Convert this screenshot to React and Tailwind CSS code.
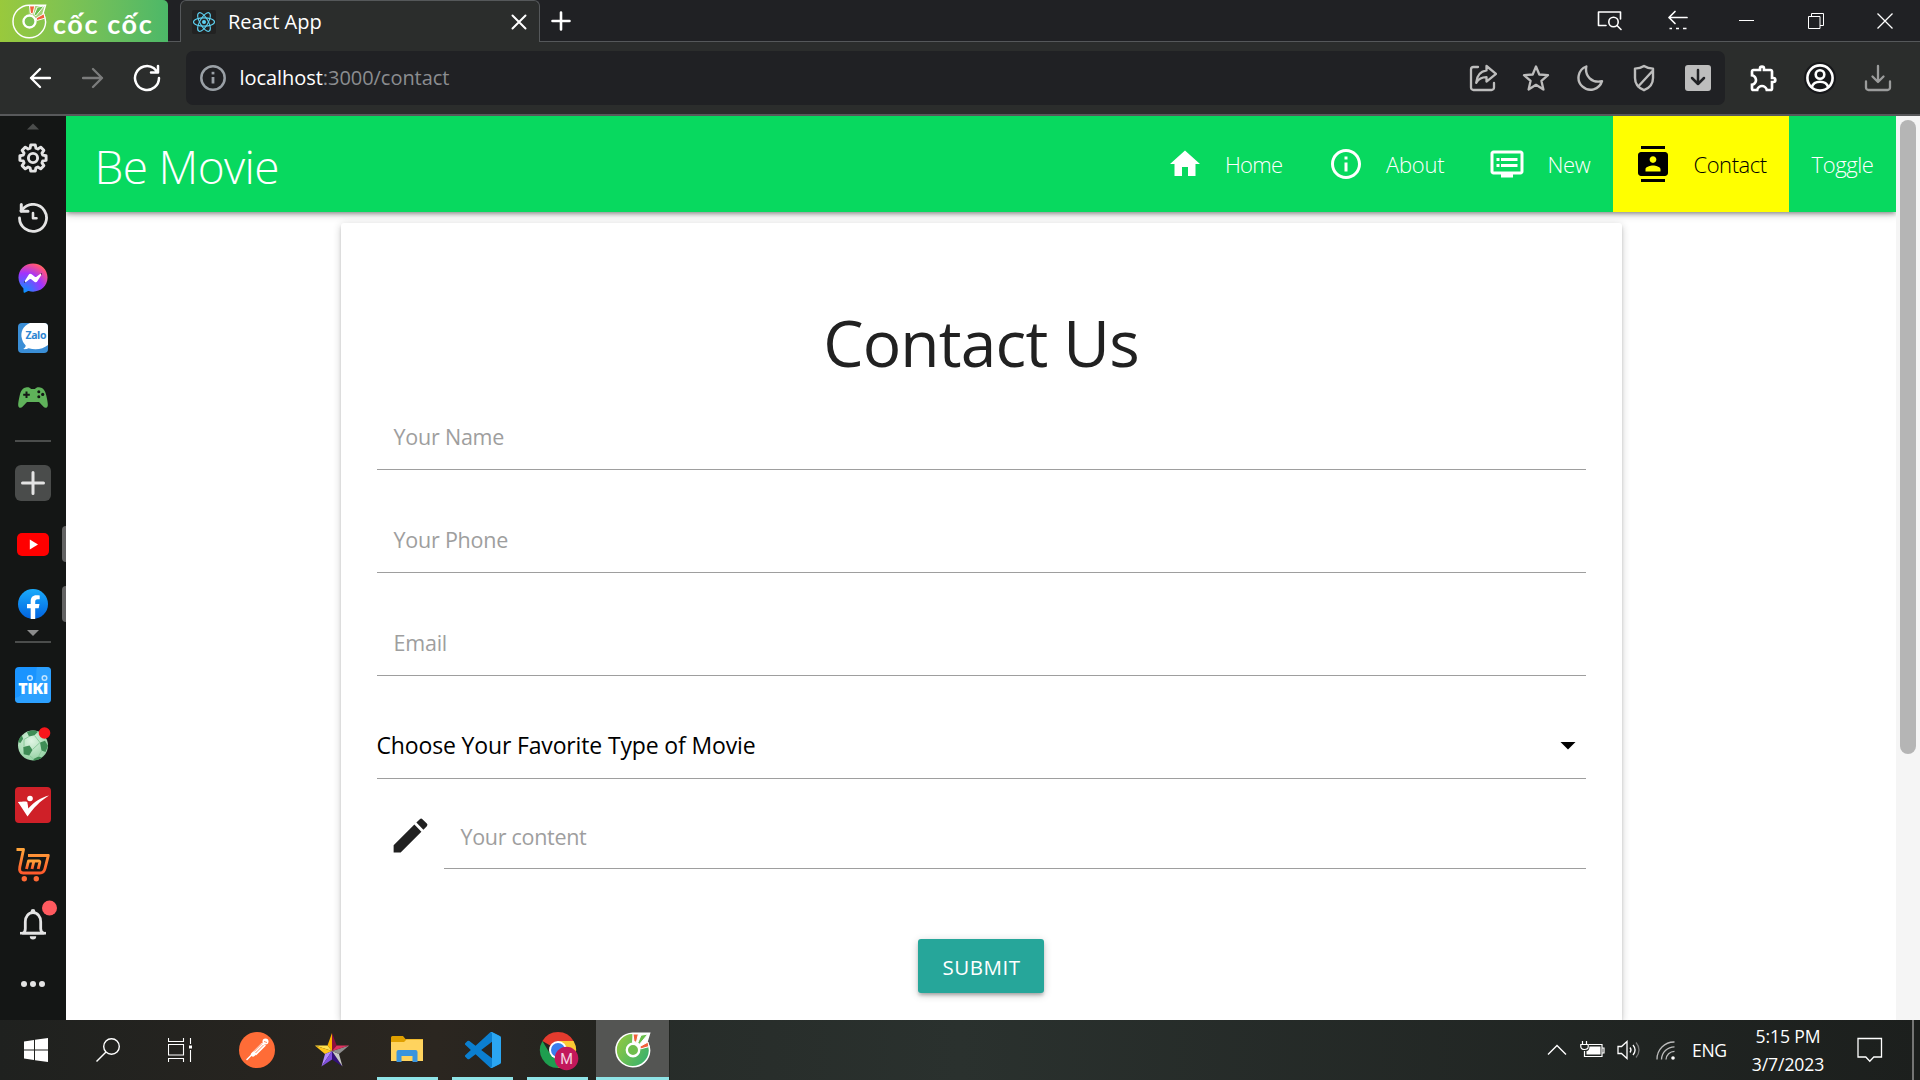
import { MdHome, MdInfoOutline, MdDvr, MdContacts, MdEdit, MdArrowDropDown, MdOutlineExtension } from "react-icons/md";
import { FaFacebookMessenger } from "react-icons/fa";

const line = { fill: "none", stroke: "currentColor", strokeLinecap: "round", strokeLinejoin: "round" };

/* ---------- shared drawings ---------- */

function CocCocMark({ size, filled, id }) {
  return (
    <svg width={size} height={size} viewBox="0 0 36 36">
      <defs>
        <linearGradient id={id} x1="0" y1="0" x2="1" y2="0.6">
          <stop offset="0" stopColor="#9acb3c" />
          <stop offset="1" stopColor="#3db26a" />
        </linearGradient>
      </defs>
      <path d="M34.5 1.2H17.5A16.8 16.8 0 1 0 34.6 18.5C34.6 14.5 33.5 12 32 9.6L34.5 1.2Z" fill={filled ? `url(#${id})` : "none"} stroke="#fff" strokeWidth={filled ? 1.6 : 1.5} />
      <path d="M17.6 1.5h16.6l-2.4 8.2 1.8 5.2-10 1.6-6.6-6Z" fill="#fff" opacity={filled ? 1 : 0.25} />
      <path d="M18 2h5.4l-2 8.4-2.4-1Z" fill="#f0623c" stroke="#fff" />
      <path d="M26 3.2 33 2l-8.4 10.2-1.8-1.4Z" fill="#6abf4b" stroke="#fff" />
      <path d="m25 14.4 8-4.4.8 4.6-8.4 2.4Z" fill="#f0623c" stroke="#fff" />
      <circle cx="18" cy="18" r="6.2" fill={filled ? "#6fbe4c" : "#7cc251"} stroke="#fff" strokeWidth="2.4" />
    </svg>
  );
}

function ReactMark() {
  return (
    <svg width="24" height="24" viewBox="0 0 24 24" fill="none" stroke="#5ed3f3" strokeWidth="1.1">
      <rect width="24" height="24" rx="2" fill="#222222" stroke="none" />
      <circle cx="12" cy="12" r="2" fill="#5ed3f3" stroke="none" />
      <ellipse cx="12" cy="12" rx="10.5" ry="4.1" />
      <ellipse cx="12" cy="12" rx="10.5" ry="4.1" transform="rotate(60 12 12)" />
      <ellipse cx="12" cy="12" rx="10.5" ry="4.1" transform="rotate(120 12 12)" />
    </svg>
  );
}

/* ---------- title bar ---------- */

function TitleBar() {
  return (
    <div className="flex h-[42px] shrink-0 bg-[#202124] text-white">
      <div className="flex w-[168px] items-center rounded-tr-[5px] bg-linear-to-r from-[#99c93c] to-[#4cb868] pl-[12px]">
        <CocCocMark size={35} id="cc-top" />
        <span className="ml-1.5 pt-1 font-['Lato'] text-[27px] leading-none font-bold tracking-[1.6px] whitespace-nowrap">cốc cốc</span>
      </div>
      <div className="w-[12px] border-b border-[#55585a]" />
      <div className="flex w-[360px] items-center rounded-t-[6px] border border-b-0 border-[#55585a] bg-[#2b2d2c] pl-[11px]">
        <ReactMark />
        <span className="ml-[12px] grow font-['Open_Sans'] text-[20px]">React App</span>
        <svg width="16" height="16" viewBox="0 0 16 16" className="mr-[12px]" {...line} strokeWidth="2"><path d="m1.5 1.5 13 13m0-13-13 13" /></svg>
      </div>
      <div className="flex grow items-center border-b border-[#55585a] pl-[11px]">
        <svg width="20" height="20" viewBox="0 0 20 20" {...line} strokeWidth="2.6"><path d="M10 1.5v17M1.5 10h17" /></svg>
        <div className="ml-auto flex items-center pr-[27px]">
          <svg width="27" height="21" viewBox="0 0 27 21" {...line} strokeWidth="1.6">
            <path d="M10 15.5H2.5V2h22v7" /><circle cx="17.5" cy="12" r="4.7" /><path d="m21 15.5 4 4" />
          </svg>
          <svg width="22" height="21" viewBox="0 0 22 21" className="ml-[44px]" {...line} strokeWidth="1.7">
            <path d="M20 7.5H2m6-6-6 6 6 6" /><path d="M2.5 18.5h2.5m4 0h3m4 0h3.5" strokeLinecap="butt" />
          </svg>
          <div className="ml-[50px] h-px w-[15px] bg-white" />
          <svg width="16" height="16" viewBox="0 0 16 16" className="ml-[54px]" fill="none" stroke="currentColor"><path d="M.5 3.5h11.5v12H.5ZM3.5 3.5V.5h12v12H12" /></svg>
          <svg width="16" height="16" viewBox="0 0 16 16" className="ml-[53px]" fill="none" stroke="currentColor" strokeWidth="1.3"><path d="m.5.5 15 15m0-15-15 15" /></svg>
        </div>
      </div>
    </div>
  );
}

/* ---------- toolbar ---------- */

function ToolBar() {
  return (
    <div className="flex h-[74px] shrink-0 items-center border-b-2 border-[#58595b] bg-[#2b2d2c] text-white">
      <svg width="22" height="22" viewBox="0 0 22 22" className="ml-[29px]" {...line} strokeWidth="2.3"><path d="M21 11H2m9-9-9 9 9 9" /></svg>
      <svg width="22" height="22" viewBox="0 0 22 22" className="ml-[31px] text-[#7b7c7c]" {...line} strokeWidth="2.3"><path d="M1 11h19m-9-9 9 9-9 9" /></svg>
      <svg width="28" height="28" viewBox="0 0 28 28" className="ml-[29px]" {...line} strokeWidth="2.5"><path d="M26 14a12 12 0 1 1-5-9.7L24.5 8M18 8.5h7V2" /></svg>
      <div className="ml-[25px] flex h-[54px] w-[1539px] items-center rounded-[7px] bg-[#202124]">
        <svg width="28" height="28" viewBox="0 0 28 28" className="ml-[13px] text-[#9aa0a6]" {...line} strokeWidth="2.5">
          <circle cx="14" cy="14" r="11.7" /><path d="M14 13v6.5" strokeWidth="2.8" strokeLinecap="butt" /><path d="M14 7.8v2.6" strokeWidth="2.8" strokeLinecap="butt" />
        </svg>
        <span className="ml-[12.5px] font-['Open_Sans'] text-[20px] tracking-[-0.05px]">localhost<span className="text-[#8b8d90]">:3000/contact</span></span>
        <div className="ml-auto flex items-center pr-[13px] text-[#bdbdbd]">
          <svg width="28" height="28" viewBox="0 0 28 28" {...line} strokeWidth="2.3">
            <path d="M9 3H4.5A2.500 2.500 0 0 0 2 5.5v18A2.500 2.500 0 0 0 4.5 26h18a2.500 2.500 0 0 0 2.5-2.5V19" />
            <path d="M17.500 2 27 9.800l-9.500 7.800v-4.400c-5 0-8 1.800-10.300 5.600.5-7 4.300-11.400 10.300-12.400Z" />
          </svg>
          <svg width="28" height="28" viewBox="0 0 28 28" className="ml-[25px]" {...line} strokeWidth="2.3"><path d="m14 2.500 3.300 8 8.700.7-6.600 5.600 2 8.700-7.400-4.700-7.400 4.700 2-8.700L2 11.200l8.700-.7Z" /></svg>
          <svg width="28" height="28" viewBox="0 0 28 28" className="ml-[26px]" {...line} strokeWidth="2.4"><path d="M10.300 2.500A12 12 0 1 0 26 17.200C16 19.500 8.500 12 10.300 2.500Z" /></svg>
          <svg width="28" height="28" viewBox="0 0 28 28" className="ml-[26px]" {...line} strokeWidth="2.4"><path d="M14 2c3 2 6 2.600 9 2.600V14c0 6-3.500 10-9 12.200C8.500 24 5 20 5 14V4.600C8 4.600 11 4 14 2ZM22.500 7 8.200 22.500" /></svg>
          <svg width="28" height="28" viewBox="0 0 28 28" className="ml-[26px]">
            <rect x="1" y="1" width="26" height="26" rx="3" fill="#bdbdbd" />
            <path d="M14 6v14m-6-6 6 6 6-6" fill="none" stroke="#202124" strokeWidth="2.5" strokeLinecap="round" strokeLinejoin="round" />
          </svg>
        </div>
      </div>
      <MdOutlineExtension className="ml-[23px] size-[32px]" />
      <svg width="34" height="34" viewBox="0 0 34 34" className="ml-[22.5px]">
        <circle cx="17" cy="17" r="16" fill="#17181b" />
        <g {...line} stroke="#fff" strokeWidth="2.6"><circle cx="17" cy="17" r="12.6" /><circle cx="17" cy="13.5" r="4.3" /><path d="M8.800 26c1.200-3.600 4.200-5.200 8.200-5.200s7 1.600 8.200 5.200" /></g>
      </svg>
      <svg width="28" height="28" viewBox="0 0 28 28" className="ml-[27.5px] text-[#9b9c9c]" {...line} strokeWidth="2.3"><path d="M14 2v15.500M8.500 12.500l5.500 5.500 5.500-5.500M2 17.500v6A2.500 2.500 0 0 0 4.500 26h19a2.500 2.500 0 0 0 2.500-2.500v-6" /></svg>
    </div>
  );
}

/* ---------- side bar ---------- */

const gearPath = (() => {
  const pts = [];
  for (let i = 0; i < 8; i++) {
    const c = (i * Math.PI) / 4 - Math.PI / 2;
    [[-0.29, 10.2], [-0.17, 13.3], [0.17, 13.3], [0.29, 10.2]].forEach(([a, r]) => {
      pts.push(`${(15 + r * Math.cos(c + a)).toFixed(2)} ${(15 + r * Math.sin(c + a)).toFixed(2)}`);
    });
  }
  return `M${pts.join("L")}Z`;
})();

function Cell({ children }) {
  return <div className="flex h-[60px] w-full shrink-0 items-center justify-center">{children}</div>;
}

function SideBar() {
  return (
    <div className="relative flex w-[66px] shrink-0 flex-col items-center bg-[#141615] text-[#e4e4e4]">
      <svg width="12" height="12" viewBox="0 0 12 12" className="shrink-0 overflow-visible"><path d="M0 13.500 6 7.500l6 6Z" fill="#4b4d4c" /></svg>
      <Cell><svg width="30" height="30" viewBox="0 0 30 30" {...line} strokeWidth="2.9"><path d={gearPath} /><circle cx="15" cy="15" r="4.6" /></svg></Cell>
      <Cell>
        <svg width="30" height="30" viewBox="0 0 30 30" {...line} strokeWidth="2.8">
          <path d="M1.500 15A13.500 13.500 0 1 0 5 5.800L3 8" /><path d="M3.300 1.500V8.200H10" strokeWidth="3" /><path d="M15 10v5.300h3.500" strokeWidth="2.6" />
        </svg>
      </Cell>
      <Cell>
        <div className="relative size-[30px]">
          <div className="absolute inset-[6px] rounded-full bg-white" />
          <FaFacebookMessenger size={30} className="relative" fill="url(#messenger)" />
          <svg width="0" height="0" className="absolute">
            <defs>
              <radialGradient id="messenger" cx="0.19" cy="1" r="1.1">
                <stop offset="0" stopColor="#0099ff" /><stop offset="0.6" stopColor="#a033ff" /><stop offset="0.93" stopColor="#ff5280" /><stop offset="1" stopColor="#ff7061" />
              </radialGradient>
            </defs>
          </svg>
        </div>
      </Cell>
      <Cell>
        <div className="relative size-[30px] overflow-hidden rounded-[4px] bg-[#3a8ed6]">
          <svg width="30" height="30" viewBox="0 0 30 30" className="absolute inset-0"><path d="M30 0H12C5 3 2 9 4 16c.8 3.500 2.500 5 3.700 6.500 0 1.500-1 2.700-2.500 3.500 2.500.4 4-.2 5.500-.8C18 27.500 25 26 30 22Z" fill="#fff" /></svg>
          <span className="absolute top-[6px] left-[7.5px] font-['Open_Sans'] text-[10.5px] leading-[13px] font-bold tracking-[-0.4px] text-[#2d86d2]">Zalo</span>
        </div>
      </Cell>
      <Cell>
        <svg width="30" height="22" viewBox="0 0 30 22">
          <path d="M8 .5c2-.5 4 0 5 1.500h4c1-1.500 3-2 5-1.500 3.500.7 5.200 3 6.300 8 .9 4 1.700 8 1.500 10-.2 2.500-2.800 3-4.300 1.300L21 15H9l-4.500 4.800C3 21.500.4 21 .2 18.500 0 16.500.8 12.500 1.700 8.500 2.800 3.500 4.500 1.200 8 .5Z" fill="#5fb25a" />
          <path d="M7.500 4.500h2v2.300h2.300v2H9.500v2.300h-2V8.800H5.200v-2h2.300Z" fill="#141615" />
          <g fill="#141615"><circle cx="20.800" cy="4.800" r="1.500" /><circle cx="20.800" cy="9.800" r="1.500" /><circle cx="24.700" cy="7.400" r="1.600" /></g>
        </svg>
      </Cell>
      <div className="mt-[12px] mb-[11px] h-0.5 w-9 shrink-0 bg-[#4b4d4c]" />
      <Cell>
        <div className="flex size-9 items-center justify-center rounded-[6px] bg-[#4a4c4b]">
          <svg width="24" height="24" viewBox="0 0 24 24" {...line} strokeWidth="3"><path d="M12 1.500v21M1.500 12h21" /></svg>
        </div>
      </Cell>
      <div className="relative mt-px flex h-[60px] w-full shrink-0 items-center justify-center">
        <svg width="32" height="23" viewBox="0 0 32 23"><rect width="32" height="23" rx="5" fill="#f00" /><path d="m12.800 6.500 8.200 5-8.200 5Z" fill="#fff" /></svg>
        <div className="absolute top-[12px] right-0 h-9 w-1 rounded-l-[4px] bg-[#636363]" />
      </div>
      <div className="relative flex h-[60px] w-full shrink-0 items-center justify-center">
        <svg width="30" height="30" viewBox="0 0 30 30">
          <defs><linearGradient id="fb" x1="0" y1="0" x2="0" y2="1"><stop offset="0" stopColor="#1aabfb" /><stop offset="1" stopColor="#0163e0" /></linearGradient></defs>
          <circle cx="15" cy="15" r="15" fill="url(#fb)" />
          <path d="M12.700 30V19.300H9V15h3.700v-2.500c0-4.200 2-6.300 5.700-6.300 1.200 0 2.400.2 3.300.4v3.700h-2c-2 0-2.500 1-2.500 2.400V15h4.300l-.8 4.300h-3.500V30Z" fill="#fff" />
        </svg>
        <div className="absolute top-[12px] right-0 h-9 w-1 rounded-l-[4px] bg-[#636363]" />
      </div>
      <svg width="12" height="6" viewBox="0 0 12 6" className="-mt-1 shrink-0"><path d="M0 0h12L6 6Z" fill="#8b8c8c" /></svg>
      <div className="mt-[5px] mb-[12px] h-0.5 w-9 shrink-0 bg-[#4b4d4c]" />
      <Cell>
        <div className="relative flex size-9 justify-center overflow-hidden rounded-[4px] bg-[#1a94ff]">
          <svg width="36" height="36" viewBox="0 0 36 36" className="absolute inset-0">
            <path d="M22 0h14v36H0V31c10-2 8-12 16-14S20 6 22 0Z" fill="#38a9ff" opacity=".6" />
            <g fill="none" stroke="#bfe3ff" strokeWidth="1.5"><circle cx="15" cy="11" r="2.3" /><circle cx="29.5" cy="11" r="2.3" /></g>
          </svg>
          <span className="relative top-[12px] font-['Open_Sans'] text-[16px] leading-[19px] font-extrabold tracking-[-0.5px] text-white">TIKI</span>
        </div>
      </Cell>
      <Cell>
        <svg width="36" height="36" viewBox="0 0 36 36" className="overflow-visible">
          <defs><radialGradient id="ball" cx=".45" cy=".35" r=".7"><stop offset="0" stopColor="#e0f5e4" /><stop offset="1" stopColor="#8fcf9f" /></radialGradient></defs>
          <circle cx="18" cy="18.5" r="15" fill="url(#ball)" />
          <g fill="#3f8d56">
            <path d="M12 5.200c3-2 8-2.200 11-.4l-3.500 3.400L14 9.400ZM8.300 20l6.200-1.400 3 4.400-3.300 5.500-5.500-1.200ZM25 15.500l5-1.800 3 5-2.500 6.300-4-1.500ZM3.200 15c.6-3 1.800-5 3.600-6.500l1.400 3.200L5.400 16ZM18.500 32l5-2.400 3.600 1c-2.300 2-6 3-8.600 2.900Z" />
          </g>
          <path d="m14 9.500-5 3 0 7M19.500 8.500l5.500 7-7.500 7M26.500 24l-3 5.500M14.500 28.500l4 3.500" fill="none" stroke="#8ccb9c" />
          <circle cx="29.500" cy="6" r="5.800" fill="#f8161b" />
        </svg>
      </Cell>
      <Cell>
        <svg width="36" height="36" viewBox="0 0 36 36">
          <rect width="36" height="36" rx="4" fill="#cf2028" />
          <path d="M3 15h8.500l1.700 6.500C19 15 26 10.500 34 8.500 25 14 18.500 21 12.500 29.500Z" fill="#fff" /><path d="M3 15c5-.5 7.500-.8 9.300 0l1 6.500L11 24Z" fill="#fff" /><circle cx="15" cy="11.5" r="2.8" fill="#fff" />
        </svg>
      </Cell>
      <Cell>
        <svg width="36" height="36" viewBox="0 0 36 36">
          <defs><linearGradient id="cart" x1="0" y1="0" x2="0" y2="1"><stop offset="0" stopColor="#ffa33a" /><stop offset="1" stopColor="#ff5a2c" /></linearGradient></defs>
          <g fill="none" stroke="url(#cart)" strokeWidth="2.9" strokeLinejoin="round">
            <path d="M1.500 2.500h7L4.800 20c-.8 4 .5 6 3.500 6h16.500c3 0 4.500-1.500 5.200-4.500L33.300 8.500H13" />
            <path d="m11.500 22 2-8h9.800c1.500 0 1.700.6 1.400 2l-1.500 6M18.800 14.500 17 22" />
          </g>
          <circle cx="9.300" cy="31.800" r="2.700" fill="#ff6a35" /><circle cx="21.300" cy="31.800" r="2.700" fill="#ff6a35" />
        </svg>
      </Cell>
      <Cell>
        <svg width="34" height="36" viewBox="0 0 34 36" className="overflow-visible">
          <g transform="translate(3 1.7)">
            <path d="M4 24.500h20.500c-2-1-2.800-2.400-2.800-4.500v-7c0-5-3-9-7.700-9s-7.700 4-7.700 9v7c0 2.100-.5 3.500-2.300 4.500Z" {...line} strokeWidth="2.8" />
            <path d="M1 24.500h26" stroke="currentColor" strokeWidth="2.6" /><circle cx="14" cy="2.5" r="2.3" fill="currentColor" /><path d="M10.800 27.500h6.400a3.200 3.200 0 0 1-6.400 0Z" fill="currentColor" />
          </g>
          <circle cx="33.5" cy="1" r="7.5" fill="#ff5a5f" />
        </svg>
      </Cell>
      <div className="flex h-[58px] w-full shrink-0 items-center justify-center">
        <svg width="24" height="6" viewBox="0 0 24 6" fill="currentColor"><circle cx="3" cy="3" r="3" /><circle cx="12" cy="3" r="3" /><circle cx="21" cy="3" r="3" /></svg>
      </div>
    </div>
  );
}

/* ---------- page ---------- */

function NavItem({ icon: Icon, label, className = "", textClass }) {
  return (
    <div className={`flex h-full items-center gap-[22.5px] px-[22.5px] ${className}`}>
      {Icon && <Icon className="size-[36px] shrink-0" />}
      <span className={`whitespace-nowrap ${textClass}`}>{label}</span>
    </div>
  );
}

function NavBar() {
  return (
    <nav className="relative flex h-24 shrink-0 items-center bg-[#08d95f] pl-[28.5px] font-['Open_Sans'] font-light text-white shadow-[0_3px_3px_rgba(0,0,0,0.14),0_4px_2px_-3px_rgba(0,0,0,0.12),0_2px_8px_rgba(0,0,0,0.25)]">
      <span className="grow pt-1 text-[46px] tracking-[-0.65px]">Be Movie</span>
      <div className="flex h-full text-[22px]">
        <NavItem icon={MdHome} label="Home" textClass="w-[57.5px] tracking-[-0.7px]" />
        <NavItem icon={MdInfoOutline} label="About" textClass="w-[58px] tracking-[-0.25px]" />
        <NavItem icon={MdDvr} label="New" textClass="w-[42.5px] tracking-[-0.3px]" />
        <NavItem icon={MdContacts} label="Contact" className="bg-[#ffff00] text-black" textClass="w-[73px] tracking-[-0.47px]" />
        <NavItem label="Toggle" textClass="w-[62px] tracking-[-0.4px]" />
      </div>
    </nav>
  );
}

function Field({ label, className }) {
  return (
    <div className={`flex shrink-0 items-end ${className}`}>
      <div className="flex h-[65px] grow items-center border-b border-[#9e9e9e] pl-[17px] text-[21.5px] tracking-[-0.22px] text-[#9e9e9e]">{label}</div>
    </div>
  );
}

function ContactCard() {
  return (
    <div className="mt-[11px] flex w-[1281px] grow flex-col self-center rounded-t-[3px] bg-white px-9 pt-[72px] font-['Open_Sans'] shadow-[0_3px_3px_rgba(0,0,0,0.14),0_4px_2px_-3px_rgba(0,0,0,0.12),0_2px_8px_rgba(0,0,0,0.2)]">
      <h1 className="h-24 shrink-0 text-center text-[64px] leading-[96px] tracking-[-0.8px] text-[#212121]">Contact Us</h1>
      <Field label="Your Name" className="h-[79px]" />
      <Field label="Your Phone" className="h-[103px]" />
      <Field label="Email" className="h-[103px]" />
      <div className="flex h-[103px] shrink-0 items-end">
        <div className="flex h-[67px] grow items-center justify-between border-b border-[#9e9e9e] text-[23px] tracking-[-0.15px] text-black">
          Choose Your Favorite Type of Movie
          <MdArrowDropDown className="size-9" />
        </div>
      </div>
      <div className="flex h-[90px] shrink-0 items-end">
        <MdEdit className="mr-[11px] mb-[11px] ml-[11px] size-[45px] shrink-0 text-[#212121]" />
        <div className="flex h-[63px] grow items-center border-b border-[#9e9e9e] pl-[17px] text-[21.5px] tracking-[-0.3px] text-[#9e9e9e]">Your content</div>
      </div>
      <button className="mt-[70px] h-[54px] w-[126px] shrink-0 self-center rounded-[3px] bg-[#26a69a] pt-0.5 pl-px text-[20.5px] tracking-[0.5px] text-white shadow-[0_3px_3px_rgba(0,0,0,0.14),0_4px_2px_-3px_rgba(0,0,0,0.12),0_2px_8px_rgba(0,0,0,0.2)]">SUBMIT</button>
    </div>
  );
}

/* ---------- task bar ---------- */

function Task({ children, open, active }) {
  return (
    <div className="flex h-full w-[75px] flex-col items-center">
      <div className={`flex w-[73px] grow items-center justify-center pt-[3px] ${active ? "bg-[#545553]" : ""} ${open || active ? "" : "pb-[3px]"}`}>{children}</div>
      {(open || active) && <div className={`h-[3px] bg-[#8fe3e6] ${active ? "w-[73px]" : "w-[61px]"}`} />}
    </div>
  );
}

function TaskBar() {
  return (
    <div className="flex h-[60px] shrink-0 items-center bg-linear-to-r from-[#20221f] via-[#2a312e] to-[#1c1f1d] text-white">
      <div className="flex h-full w-[670px] items-center bg-linear-to-r from-[#1f211f] via-[#2b2620] via-65% to-[#20231f]">
        <div className="flex w-[220px] items-center">
          <div className="flex w-[72px] justify-center"><svg width="24" height="24" viewBox="0 0 24 24" fill="#fff"><path d="M0 3.400 10 2v9.500H0ZM11 1.800 24 0v11.500H11ZM0 12.500h10V22L0 20.600ZM11 12.500h13V24l-13-1.800Z" /></svg></div>
          <div className="flex w-[72px] justify-center"><svg width="24" height="24" viewBox="0 0 24 24" fill="none" stroke="#fff" strokeWidth="1.4"><circle cx="15.500" cy="8.500" r="7.800" /><path d="M10 14 .5 23.500" /></svg></div>
          <div className="flex w-[72px] justify-center"><svg width="24" height="24" viewBox="0 0 24 24" fill="none" stroke="#fff" strokeWidth="1.1"><path d="M.5 6.500h15v10.500H.5ZM.5 0v3.500h15V0M.5 24v-3.500h15V24M22.500 0v6M22.500 12v12" /><path d="M21 7.500h3v3h-3z" fill="#fff" stroke="none" /></svg></div>
        </div>
        <Task>
          <svg width="36" height="36" viewBox="0 0 36 36"><circle cx="18" cy="18" r="18" fill="#ff6c37" /><circle cx="26.500" cy="9.500" r="3" fill="#fff" /><path d="M23.500 13 14 22.500" stroke="#fff" strokeWidth="4.200" strokeLinecap="round" /><path d="m14 21.500-6 6M26 13.500l-9 9" stroke="#fff" strokeWidth="1.500" strokeLinecap="round" /><path d="m23 11.500-8 8m9.500-6.500-8 8M25 9.500l3 1" stroke="#ff6c37" strokeWidth=".8" /></svg>
        </Task>
        <Task>
          <svg width="36" height="36" viewBox="0 0 36 36">
            <path d="M18 1v18l-4.500-5.500Z" fill="#ffb400" /><path d="M18 1v18l4.700-5.500Z" fill="#8c0f3d" />
            <path d="M18 19 .8 13.500h12.700Z" fill="#ffe14d" /><path d="M18 19 .8 13.500 11 22Z" fill="#ffc61a" />
            <path d="M18 19 11 22 7.500 34.500Z" fill="#b48cff" /><path d="M18 19 7.500 34.500 18 27.500Z" fill="#8150e0" />
            <path d="M18 19v8.500l10.500 7Z" fill="#33107a" /><path d="m18 19 10.500 15.500L25 22Z" fill="#c9c9c9" />
            <path d="m18 19 7 3 10.200-8.500Z" fill="#8d8d8d" /><path d="m18 19 4.700-5.500h12.500Z" fill="#e0315f" />
          </svg>
        </Task>
        <div className="flex h-full pl-px">
          <Task open>
            <svg width="33" height="30" viewBox="0 0 33 30"><path d="M0 2.500A1.500 1.500 0 0 1 1.500 1H12l2.500 3H32v8H0Z" fill="#e0a000" /><path d="M0 7h13l2.500-2.500H32V26H0Z" fill="#ffd35e" /><path d="M5.500 27V17a2 2 0 0 1 2-2h17a2 2 0 0 1 2 2v10h-5v-6h-11v6Z" fill="#3a94de" /></svg>
          </Task>
          <Task open>
            <svg width="36" height="36" viewBox="0 0 24 24"><path d="M23.15 2.587L18.21.21a1.494 1.494 0 0 0-1.705.29l-9.46 8.63-4.12-3.128a.999.999 0 0 0-1.276.057L.327 7.261A1 1 0 0 0 .326 8.74L3.899 12 .326 15.26a1 1 0 0 0 .001 1.479L1.65 17.94a.999.999 0 0 0 1.276.057l4.12-3.128 9.46 8.63a1.492 1.492 0 0 0 1.704.29l4.942-2.377A1.5 1.5 0 0 0 24 20.06V3.939a1.5 1.5 0 0 0-.85-1.352zm-5.146 14.861L10.826 12l7.178-5.448v10.896z" fill="#0b7fd0" /><path d="M23.150 2.587 18.210.21c-.5-.2-.9-.2-1.300.02.6 0 1.094.5 1.094 1.270v21c0 .8-.5 1.300-1.100 1.300.4.200.9.200 1.306-.01l4.942-2.377A1.500 1.500 0 0 0 24 20.060V3.939a1.500 1.500 0 0 0-.850-1.352Z" fill="#2ba6f1" /></svg>
          </Task>
          <Task open>
            <svg width="40" height="40" viewBox="0 0 40 40" className="relative top-px left-px">
              <path d="M19 19 3.400 10A18 18 0 0 1 34.600 10Z" fill="#e33b2e" /><path d="M19 10h15.600A18 18 0 0 1 19 37l7.500-13.500Z" fill="#fcc934" /><path d="M3.400 10A18 18 0 0 0 19 37l7.800-13.500L19 19l-7.500 4.500Z" fill="#1e9e4f" />
              <circle cx="19" cy="19" r="9" fill="#fff" /><circle cx="19" cy="19" r="7" fill="#3b7ded" />
              <circle cx="27.500" cy="27.500" r="11.800" fill="#c2185b" />
              <text x="27.500" y="32.800" textAnchor="middle" fontFamily="Roboto" fontSize="14.5" fill="#f5d5e2">M</text>
            </svg>
          </Task>
          <Task active><CocCocMark size={36} filled id="cc-task" /></Task>
        </div>
      </div>
      <div className="ml-auto flex items-center font-['Open_Sans'] text-[17.6px] leading-[28px]">
        <svg width="20" height="12" viewBox="0 0 20 12" fill="none" stroke="#fff" strokeWidth="1.4"><path d="m1 10.500 9-9 9 9" /></svg>
        <svg width="25" height="18" viewBox="0 0 25 18" className="ml-[13px]" fill="none" stroke="#fff" strokeWidth="1.2"><path d="M9 3.500h13v12H4.500V10M22.500 7h1.500v5h-1.500M2.500 0v3M6.500 0v3M.8 3.500h7.400v2.300c0 1.600-1.500 2.700-3.700 2.700S.8 7.400.8 5.800Z" /><path d="M9.500 5.500H20.500v8H6.500V10c2 0 3-2 3-4.500Z" fill="#fff" stroke="none" /></svg>
        <svg width="24" height="20" viewBox="0 0 24 20" className="ml-[12px]" fill="none" stroke="#fff" strokeWidth="1.3"><path d="M1 6.500h3.500L10 1.500v17l-5.500-5H1ZM13 7.500c1.200 1.500 1.200 3.500 0 5M16 5c2.500 3 2.500 7 0 10" /><path d="M19 2.500c4 4.500 4 10.500 0 15" stroke="#777" /></svg>
        <svg width="19" height="19" viewBox="0 0 19 19" className="ml-[15px]" fill="none" stroke="#bbb" strokeWidth="1.3"><path d="M1 18.500A17 17 0 0 1 18.500 1M5.500 18.500a13 13 0 0 1 13-12.700M10 18.500a8.500 8.500 0 0 1 8.500-8.200" /><circle cx="17" cy="17" r="1.8" fill="#fff" stroke="none" /></svg>
        <span className="ml-[17px] w-[36px] tracking-[-0.4px]">ENG</span>
        <div className="ml-[14px] w-[92px] text-center tracking-[-0.1px]"><div>5:15 PM</div><div>3/7/2023</div></div>
        <svg width="26" height="26" viewBox="0 0 26 26" className="ml-[23px]" fill="none" stroke="#fff" strokeWidth="1.3"><path d="M1 1.500h23.500V20h-7.700l-4 4.300-4-4.300H1Z" /></svg>
        <div className="ml-[29px] h-[60px] w-[2px] bg-[#747574]" />
        <div className="w-[6px]" />
      </div>
    </div>
  );
}

export default function App() {
  return (
    <div className="flex h-[1080px] w-[1920px] flex-col overflow-hidden bg-white">
      <TitleBar />
      <ToolBar />
      <div className="flex h-[904px] shrink-0 overflow-hidden">
        <SideBar />
        <div className="flex w-[1830px] flex-col overflow-hidden bg-white">
          <NavBar />
          <ContactCard />
        </div>
        <div className="flex w-6 justify-center bg-[#f5f5f5] pt-1">
          <div className="h-[634px] w-4 rounded-full bg-[#b5b5b5]" />
        </div>
      </div>
      <TaskBar />
    </div>
  );
}
